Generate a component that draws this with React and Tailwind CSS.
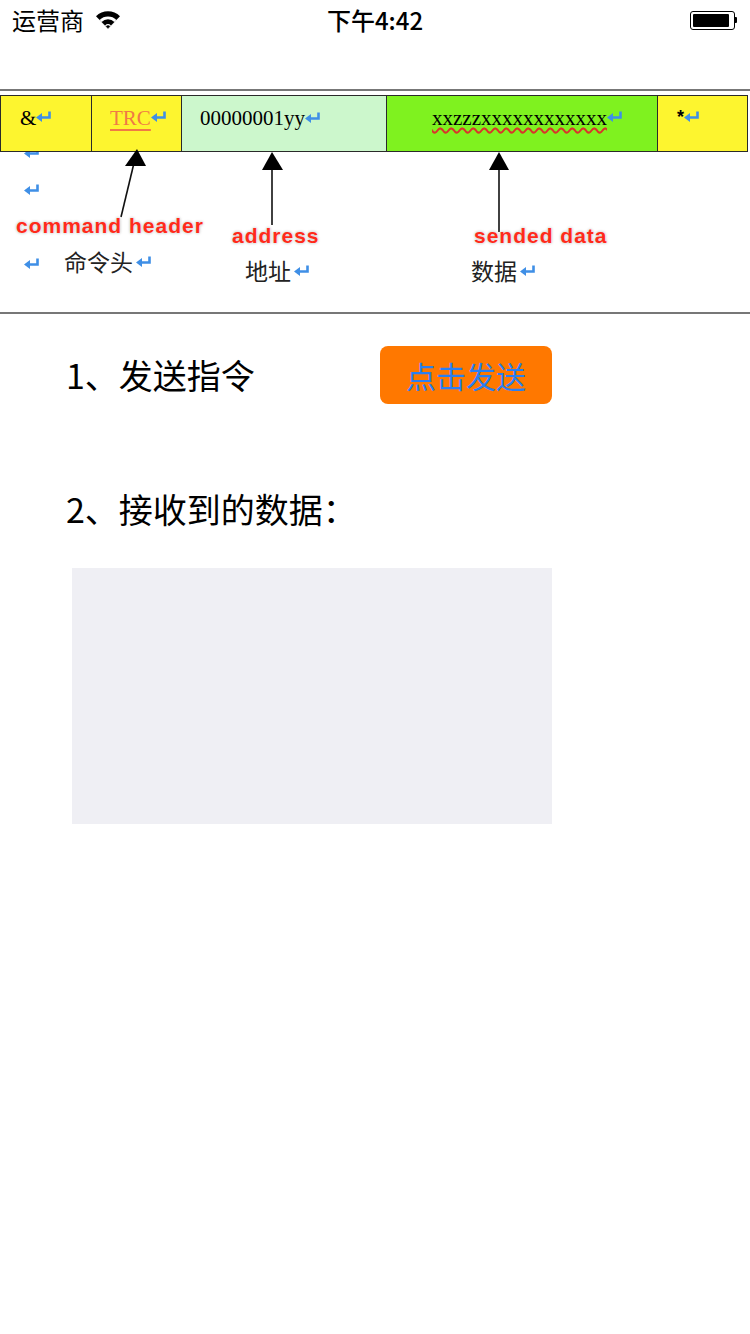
import React from 'react';

const sans = "font-['Noto_Sans_CJK_SC','Noto_Sans',sans-serif]";
const serif = "font-['Liberation_Serif','Noto_Sans_CJK_SC',serif]";
const label =
  "absolute leading-none font-bold text-[21px] tracking-[1px] text-[#ff2a1a] font-['Liberation_Sans',Arial,sans-serif] [text-shadow:0_0_2px_#fff,0_0_3px_#9a9a9a]";

function ReturnMark({ className = '' }) {
  return (
    <svg width="16" height="13" viewBox="0 0 16 13" className={className}>
      <path d="M13.5 1.5 V7.5 H5" fill="none" stroke="#3f8fe6" strokeWidth="2.6" />
      <polygon points="0,7.5 6,3 6,12" fill="#3f8fe6" />
    </svg>
  );
}

function StatusBar() {
  return (
    <div className={`h-[40px] flex items-center justify-between px-[12px] text-black ${sans}`}>
      <div className="flex items-center gap-[11px] w-[200px]">
        <span className="text-[24px] leading-none">运营商</span>
        <svg width="26" height="18" viewBox="0 0 26 18">
          <path d="M13 17.5 L1 5.2 A17 17 0 0 1 25 5.2 Z" fill="#000" />
          <path d="M13 17.5 L4.6 8.9 A12 12 0 0 1 21.4 8.9 Z" fill="#fff" />
          <path d="M13 17.5 L6.6 10.9 A9 9 0 0 1 19.4 10.9 Z" fill="#000" />
          <path d="M13 17.5 L10 14.4 A4.3 4.3 0 0 1 16 14.4 Z" fill="#fff" />
          <path d="M13 17.5 L10.9 15.3 A3 3 0 0 1 15.1 15.3 Z" fill="#000" />
        </svg>
      </div>
      <span className="text-[24px] leading-none font-medium">下午4:42</span>
      <div className="w-[200px] flex justify-end pr-[1px]">
        <div className="flex items-center">
          <div className="w-[45px] h-[19px] rounded-[3px] border-[1.5px] border-black p-[2px]">
            <div className="h-full w-[36px] bg-black rounded-[1px]" />
          </div>
          <div className="w-[2px] h-[6px] bg-black rounded-r-[1px]" />
        </div>
      </div>
    </div>
  );
}

function Cell({ width, bg, pl, last, children }) {
  return (
    <div
      className={`${width} ${bg} ${pl} ${last ? 'border-r' : ''} border-l border-[#2a2a2a] h-full flex items-start pt-[12px] ${serif} text-[21px] leading-none text-black`}
    >
      {children}
    </div>
  );
}

function Diagram() {
  return (
    <div>
      <div className="h-[2px] bg-[#777]" />
      <div className="relative h-[221px] pt-[4px] bg-white">
        <div className="relative z-10 h-[57px] w-[748px] flex border-y border-[#2a2a2a]">
          <Cell width="w-[91px]" bg="bg-[#fdf52f]" pl="pl-[19px]">
            <span>&amp;</span>
            <ReturnMark className="mt-[2px]" />
          </Cell>
          <Cell width="w-[90px]" bg="bg-[#fdf52f]" pl="pl-[18px]">
            <span className="text-[#f07a45] underline decoration-[#f07a45] underline-offset-[4px]">TRC</span>
            <ReturnMark className="mt-[2px]" />
          </Cell>
          <Cell width="w-[205px]" bg="bg-[#ccf7cc]" pl="pl-[18px]">
            <span>00000001yy</span>
            <ReturnMark className="mt-[3px]" />
          </Cell>
          <Cell width="w-[271px]" bg="bg-[#7ff21f]" pl="pl-[45px]">
            <span className="underline decoration-wavy decoration-[#d9352a] underline-offset-[2px]">xxzzzxxxxxxxxxxxx</span>
            <ReturnMark className="mt-[2px]" />
          </Cell>
          <Cell width="w-[91px]" bg="bg-[#fdf52f]" pl="pl-[19px]" last>
            <span className="font-['Liberation_Sans',sans-serif] font-bold text-[18px]">*</span>
            <ReturnMark className="mt-[2px]" />
          </Cell>
        </div>

        <ReturnMark className="absolute left-[24px] top-[55px]" />
        <ReturnMark className="absolute left-[24px] top-[92px]" />
        <ReturnMark className="absolute left-[24px] top-[166px]" />

        <svg className="absolute inset-0 z-20" width="750" height="221" viewBox="0 0 750 221">
          <line x1="134" y1="72" x2="121" y2="126" stroke="#111" strokeWidth="1.6" />
          <polygon points="137,58 125,75 146,75" fill="#000" />
          <line x1="272" y1="78" x2="272" y2="134" stroke="#111" strokeWidth="1.6" />
          <polygon points="272,61 262,79 283,79" fill="#000" />
          <line x1="499" y1="78" x2="499" y2="141" stroke="#111" strokeWidth="1.6" />
          <polygon points="499,61 489,79 509,79" fill="#000" />
        </svg>

        <span className={`${label} left-[16px] top-[124px] z-30`}>command header</span>
        <span className={`${label} left-[232px] top-[134px] z-30`}>address</span>
        <span className={`${label} left-[474px] top-[134px] z-30`}>sended data</span>

        <div className={`absolute left-[64px] top-[159px] flex items-center text-[23px] leading-none text-[#222] ${sans}`}>
          <span>命令头</span>
          <ReturnMark className="ml-[3px]" />
        </div>
        <div className={`absolute left-[245px] top-[168px] flex items-center text-[23px] leading-none text-[#222] ${sans}`}>
          <span>地址</span>
          <ReturnMark className="ml-[3px]" />
        </div>
        <div className={`absolute left-[471px] top-[168px] flex items-center text-[23px] leading-none text-[#222] ${sans}`}>
          <span>数据</span>
          <ReturnMark className="ml-[3px]" />
        </div>
      </div>
      <div className="h-[2px] bg-[#777]" />
    </div>
  );
}

export default function App() {
  return (
    <div className={`w-[750px] h-[1334px] bg-white overflow-hidden ${sans}`}>
      <StatusBar />
      <div className="h-[49px]" />
      <Diagram />

      <div className="mt-[32px] flex items-center pl-[66px]">
        <div className="w-[314px] text-[34px] leading-none text-black">1、发送指令</div>
        <button className="w-[172px] h-[58px] rounded-[8px] bg-[#ff7800] text-[30px] leading-none text-[#2a7ff2]">
          点击发送
        </button>
      </div>

      <div className="mt-[85px] pl-[66px] h-[40px] flex items-center text-[34px] leading-none text-black">
        2、接收到的数据：
      </div>

      <div className="mt-[39px] ml-[72px] w-[480px] h-[256px] bg-[#efeff4]" />
    </div>
  );
}
